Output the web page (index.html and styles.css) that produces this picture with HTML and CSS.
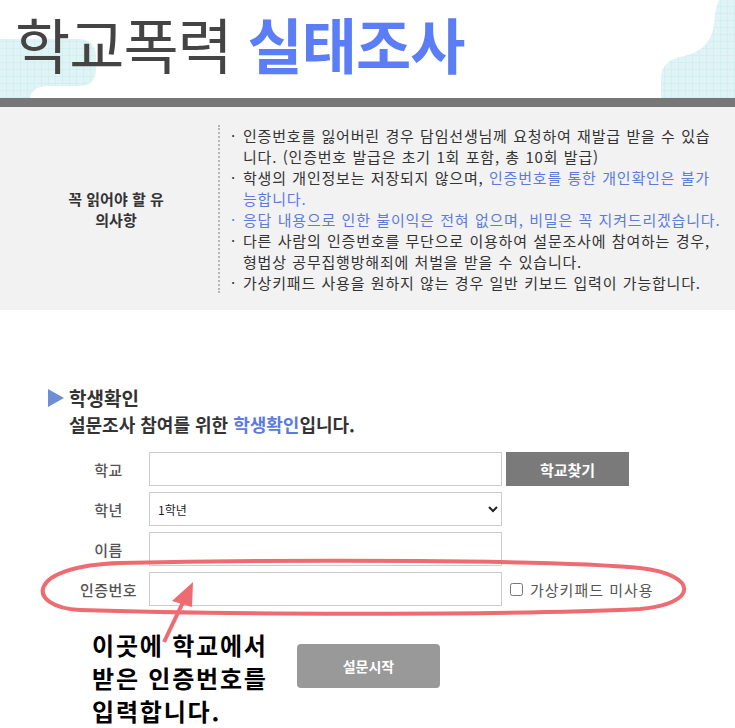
FILE: index.html
```html
<!DOCTYPE html>
<html lang="ko">
<head>
    <meta charset="UTF-8">
    <meta name="viewport" content="width=device-width, initial-scale=1.0">
    <title>학교폭력 실태조사</title>
    <link rel="stylesheet" href="styles.css">
</head>
<body>
<div class="page">

    <div class="top">
        <svg class="deco" width="735" height="98" viewBox="0 0 735 98">
            <defs>
                <pattern id="grid" width="7" height="7" patternUnits="userSpaceOnUse">
                    <rect width="7" height="7" fill="#e0f4f5"/>
                    <path d="M7 0V7H0" fill="none" stroke="#c9ebee" stroke-width="1"/>
                </pattern>
            </defs>
            <path d="M0 39 H78 Q96 39 96 57 V70 Q96 85 80 86 H46 Q32 87 30 98 H0 Z" fill="url(#grid)"/>
            <path d="M719 0 H735 V98 H661 V78 Q661 60 684 56 Q711 50 714 24 Q715 8 719 0 Z" fill="url(#grid)"/>
        </svg>
        <h1 class="title">학교폭력 <b>실태조사</b></h1>
    </div>

    <div class="notice">
        <div class="notice-label">꼭 읽어야 할 유<br>의사항</div>
        <ul class="notice-list">
            <li>인증번호를 잃어버린 경우 담임선생님께 요청하여 재발급 받을 수 있습<br>니다. (인증번호 발급은 초기 1회 포함, 총 10회 발급)</li>
            <li>학생의 개인정보는 저장되지 않으며, <span class="blue">인증번호를 통한 개인확인은 불가<br>능합니다.</span></li>
            <li class="blue">응답 내용으로 인한 불이익은 전혀 없으며, 비밀은 꼭 지켜드리겠습니다.</li>
            <li>다른 사람의 인증번호를 무단으로 이용하여 설문조사에 참여하는 경우,<br>형법상 공무집행방해죄에 처벌을 받을 수 있습니다.</li>
            <li>가상키패드 사용을 원하지 않는 경우 일반 키보드 입력이 가능합니다.</li>
        </ul>
    </div>

    <div class="check">
        <h2 class="check-title"><span class="tri"></span>학생확인</h2>
        <p class="check-sub">설문조사 참여를 위한 <span class="blue">학생확인</span>입니다.</p>

        <div class="form">
            <div class="row">
                <label class="lbl">학교</label>
                <input class="field" type="text">
                <button class="btn-find" type="button">학교찾기</button>
            </div>
            <div class="row">
                <label class="lbl">학년</label>
                <select class="field sel">
                    <option>1학년</option>
                    <option>2학년</option>
                    <option>3학년</option>
                </select>
            </div>
            <div class="row">
                <label class="lbl">이름</label>
                <input class="field" type="text">
            </div>
            <div class="row">
                <label class="lbl">인증번호</label>
                <input class="field" type="text">
                <label class="keypad"><input type="checkbox"> 가상키패드 미사용</label>
            </div>
        </div>

        <div class="submit-row">
            <p class="note">이곳에 학교에서<br>받은 인증번호를<br>입력합니다.</p>
            <button class="btn-start" type="button">설문시작</button>
        </div>
    </div>

    <svg class="marks" width="735" height="728" viewBox="0 0 735 728">
        <path d="M120 563 C300 559 560 560 640 568 C700 575 698 604 640 609 C500 616 200 614 80 610 C25 607 25 566 120 563 Z"
              fill="none" stroke="#ee6b71" stroke-width="4"/>
        <path d="M164 642 L186 596" stroke="#ee6b71" stroke-width="4" fill="none"/>
        <path d="M193 582 L172 601 L192 607 Z" fill="#ee6b71"/>
    </svg>
</div>
</body>
</html>
```

FILE: styles.css
```css
body { margin: 0; background: #fff; color: #333; font-family: "Noto Sans CJK KR", "Noto Sans", sans-serif; }
.page { position: relative; width: 735px; height: 728px; overflow: hidden; }

.top { position: relative; height: 98px; border-bottom: 9px solid #777; }
.deco { position: absolute; left: 0; top: 0; }
.title { position: relative; margin: 0; padding: 0 0 0 15px; font-size: 60px; line-height: 86px; font-weight: 400; letter-spacing: -1px; color: #444; }
.title b { color: #5b7ef6; font-weight: 700; }

.notice { display: flex; background: #f2f2f2; padding: 18px 0 17px; }
.notice-label { width: 218px; align-self: center; text-align: center; font-size: 15px; font-weight: 700; line-height: 21px; color: #333; padding-left: 14px; box-sizing: border-box; }
.notice-list { margin: 0; padding: 0 0 0 11px; list-style: none; border-left: 2px dotted #b5b5b5; font-size: 15px; line-height: 21px; letter-spacing: 0.8px; word-spacing: 0.5px; color: #333; }
.notice-list li { padding-left: 12px; text-indent: -12px; }
.notice-list li::before { content: "·"; display: inline-block; width: 12px; text-indent: 0; }
.blue { color: #5b7be0; }

.check { padding: 75px 0 0 48px; }
.check-title { margin: 0; font-size: 19px; line-height: 26px; font-weight: 700; color: #333; display: flex; align-items: center; }
.tri { width: 0; height: 0; border-left: 16px solid #6c8ed6; border-top: 9px solid transparent; border-bottom: 9px solid transparent; margin-right: 5px; }
.check-sub { margin: 0 0 0 21px; font-size: 18px; line-height: 26px; font-weight: 700; color: #333; }

.form { margin-top: 15px; padding-left: 20px; display: flex; flex-direction: column; gap: 6px; }
.row { display: flex; align-items: center; }
.lbl { width: 81px; text-align: center; font-size: 15px; font-weight: 500; letter-spacing: 0.5px; color: #555; }
.field { width: 353px; height: 34px; box-sizing: border-box; border: 1px solid #ccc; background: #fff; margin: 0; padding: 0 6px; font-family: inherit; font-size: 12px; color: #222; }
.sel { padding: 0 4px; }
.btn-find { margin-left: 4px; width: 123px; height: 34px; border: none; background: #7a7a7a; color: #fff; font-family: inherit; font-size: 15px; font-weight: 700; }
.keypad { margin-left: 8px; display: flex; align-items: center; font-size: 15px; letter-spacing: 1px; color: #555; }
.keypad input { margin: 0 7px 0 0; width: 13px; height: 13px; }

.submit-row { display: flex; align-items: flex-start; margin-top: 22px; padding-left: 44px; }
.note { margin: 0; width: 205px; font-size: 24px; line-height: 33px; font-weight: 700; color: #000; letter-spacing: 1.8px; }
.btn-start { margin: 16px 0 0 0; width: 143px; height: 44px; border: none; border-radius: 4px; background: #999; color: #fff; font-family: inherit; font-size: 14px; font-weight: 700; }

.marks { position: absolute; left: 0; top: 0; pointer-events: none; }
```
